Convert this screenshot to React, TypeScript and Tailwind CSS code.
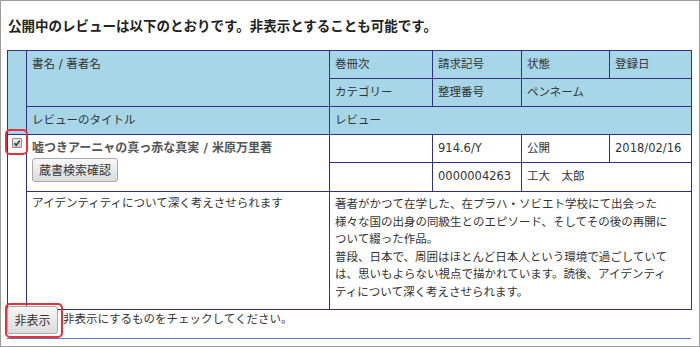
export default function App() {
  const head = 'border border-[#2f3185] bg-[#a6d6e8] align-top pl-[5px] pt-[5px] leading-[16px] font-normal text-left';
  const cell = 'border border-[#2f3185] bg-white align-top pl-[5px] pt-[5px] leading-[16px]';

  return (
    <div className="relative w-[700px] h-[347px] overflow-hidden border border-[#9c9c9c] bg-white text-[#333] font-['DejaVu_Sans','Noto_Sans_CJK_JP',sans-serif]">
      <h1 className="pl-[7px] pt-[14px] mb-[15px] text-[13.5px] leading-[20px] font-bold text-[#222] font-['Noto_Sans_CJK_JP',sans-serif]">
        公開中のレビューは以下のとおりです。非表示とすることも可能です。
      </h1>

      <table className="ml-[6px] w-[684px] table-fixed border-collapse text-[11.5px]">
        <colgroup>
          <col className="w-[19px]" />
          <col className="w-[303px]" />
          <col className="w-[103px]" />
          <col className="w-[89px]" />
          <col className="w-[88px]" />
          <col className="w-[82px]" />
        </colgroup>
        <thead>
          <tr className="h-[28px]">
            <th rowSpan={3} className={head}></th>
            <th rowSpan={2} className={head}>書名 / 著者名</th>
            <th className={head}>巻冊次</th>
            <th className={head}>請求記号</th>
            <th className={head}>状態</th>
            <th className={head}>登録日</th>
          </tr>
          <tr className="h-[28px]">
            <th className={head}>カテゴリー</th>
            <th className={head}>整理番号</th>
            <th colSpan={2} className={head}>ペンネーム</th>
          </tr>
          <tr className="h-[28px]">
            <th className={head}>レビューのタイトル</th>
            <th colSpan={4} className={head}>レビュー</th>
          </tr>
        </thead>
        <tbody>
          <tr className="h-[28px]">
            <td rowSpan={3} className="border border-[#2f3185] bg-white align-top pl-[4px] pt-[3px]">
              <span className="flex w-[10px] h-[10px] items-center justify-center rounded-[1px] border border-[#8c8c8c] bg-linear-to-b from-[#eeeeee] to-[#cccccc]">
                <svg width="8" height="8" viewBox="0 0 10 10">
                  <path d="M1.8 5.4 L4 7.8 L8.4 2" fill="none" stroke="#333" strokeWidth="1.9" />
                </svg>
              </span>
            </td>
            <td rowSpan={2} className={cell}>
              <div className="font-bold text-[12px] text-[#555]">嘘つきアーニャの真っ赤な真実 / 米原万里著</div>
              <button className="mt-[2px] h-[24px] w-[86px] rounded-[3px] border border-[#a9a9a9] bg-linear-to-b from-[#f7f7f7] to-[#dcdcdc] text-[12px] text-[#333] font-['Noto_Sans_CJK_JP',sans-serif]">
                蔵書検索確認
              </button>
            </td>
            <td className={cell}></td>
            <td className={cell}>914.6/Y</td>
            <td className={cell}>公開</td>
            <td className={cell}>2018/02/16</td>
          </tr>
          <tr className="h-[29px]">
            <td className={cell}></td>
            <td className={cell}>0000004263</td>
            <td colSpan={2} className={cell}>工大　太郎</td>
          </tr>
          <tr className="h-[118px]">
            <td className="border border-[#2f3185] bg-white align-top pl-[5px] pt-[3px] leading-[16px]">
              アイデンティティについて深く考えさせられます
            </td>
            <td colSpan={4} className="border border-[#2f3185] bg-white align-top pl-[5px] pt-[4px] leading-[17.5px]">
              <div className="w-[336px]">
                著者がかつて在学した、在プラハ・ソビエト学校にて出会った様々な国の出身の同級生とのエピソード、そしてその後の再開について綴った作品。
                <br />
                普段、日本で、周囲はほとんど日本人という環境で過ごしていては、思いもよらない視点で描かれています。読後、アイデンティティについて深く考えさせられます。
              </div>
            </td>
          </tr>
        </tbody>
      </table>

      <div className="relative -mt-[4px] ml-[6px] w-[684px] flex items-center gap-[5px] pb-[4px] border-b border-[#5a7bc4] text-[11.5px]">
        <button className="h-[28px] w-[51px] rounded-[3px] border border-[#a9a9a9] bg-linear-to-b from-[#f7f7f7] to-[#dcdcdc] text-[12px] text-[#333] font-['Noto_Sans_CJK_JP',sans-serif]">
          非表示
        </button>
        <span>非表示にするものをチェックしてください。</span>
      </div>

      {/* annotation outlines */}
      <div className="absolute left-[4px] top-[128px] w-[23px] h-[26px] rounded-[5px] border-2 border-[#e3323c]" />
      <div className="absolute left-[4px] top-[302px] w-[58px] h-[35px] rounded-[5px] border-2 border-[#e3323c]" />
    </div>
  );
}
